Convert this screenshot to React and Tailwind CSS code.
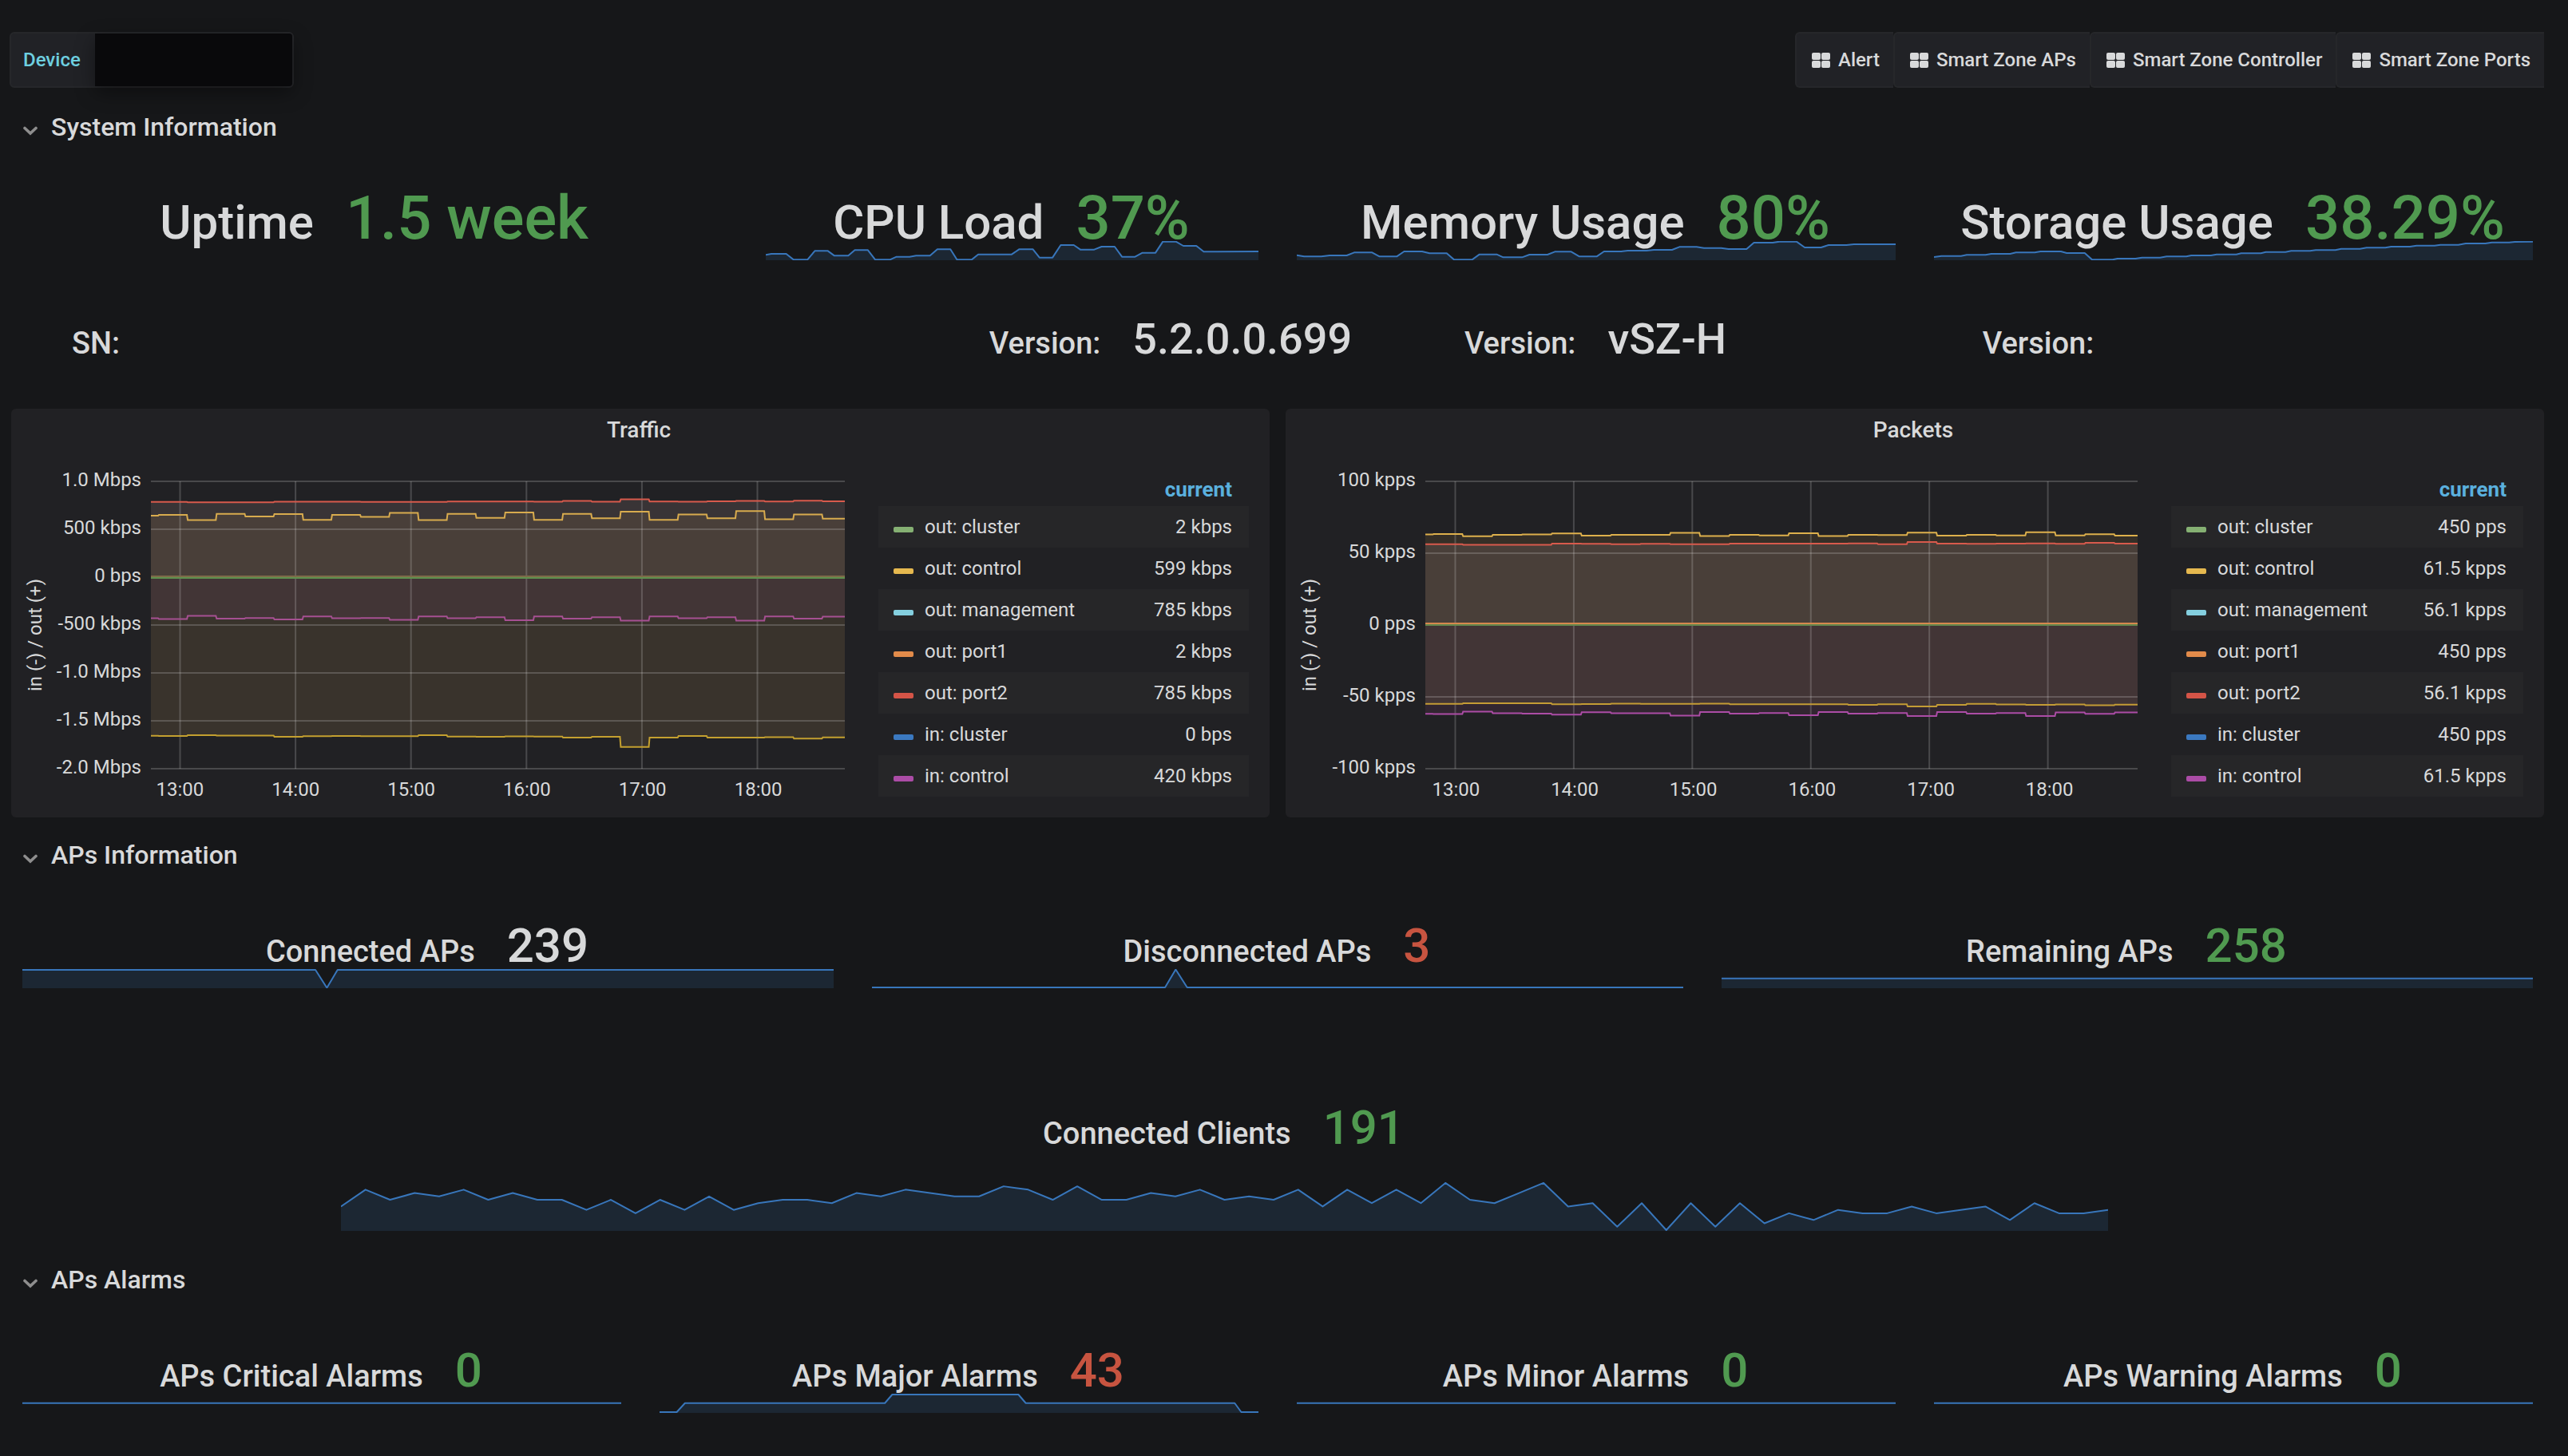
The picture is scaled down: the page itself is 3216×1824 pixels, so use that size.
import React from "react";

const LINKS = ["Alert", "Smart Zone APs", "Smart Zone Controller", "Smart Zone Ports"];

const CPU = {
  w: 603,
  h: 72,
  points:
    "0,52 7,48 25,48 34,70 51,70 60,37 76,37 84,55 101,55 109,34 125,34 134,70 152,70 160,59 176,59 184,55 201,55 210,31 226,31 234,70 252,70 260,50 301,50 310,31 327,31 335,62 351,62 361,15 377,15 385,32 402,32 411,21 427,21 436,59 452,59 461,44 477,44 486,2 502,2 511,18 527,18 536,40 603,39",
};
const MEMORY = {
  w: 731,
  h: 72,
  points:
    "0,53 9,58 30,58 40,54 61,54 70,43 92,43 101,58 122,58 131,39 153,39 162,46 183,46 192,70 214,70 223,50 244,50 252,61 275,61 284,51 306,51 315,40 335,40 345,58 366,58 375,39 396,39 404,36 427,36 436,33 458,33 467,22 488,22 497,26 518,26 527,30 549,30 558,6 581,6 589,2 610,2 620,24 640,24 649,15 671,15 680,12 731,12",
};
const STORAGE = {
  w: 731,
  h: 72,
  points:
    "0,60 9,56 33,56 40,52 63,52 70,48 93,48 100,43 123,43 130,39 155,39 162,45 184,45 193,70 218,70 224,66 246,66 254,62 276,62 284,58 308,58 314,54 338,54 345,50 369,50 375,46 399,46 405,41 429,41 436,37 459,37 466,34 490,34 497,29 520,29 528,25 551,25 558,21 581,21 589,17 611,17 618,14 640,14 649,9 673,9 681,5 702,5 709,3 731,2",
};
const CONNECTED = { w: 991, h: 47, points: "0,2 358,2 372,46 385,2 991,2" };
const DISCONNECTED = { w: 991, h: 47, points: "0,45 358,45 371,1 385,45 991,45" };
const REMAINING = { w: 991, h: 47, points: "0,23 991,23" };
const MAJOR = { w: 731, h: 47, points: "0,45 21,45 31,23 275,23 284,2 438,2 447,23 702,23 710,45 731,45" };
const FLAT = { w: 731, h: 47, points: "0,23 731,23", noFill: true };

const CLIENT_VALUES = [
  7, 12, 9, 11, 10, 12, 9, 11, 9, 9, 6, 9, 5, 9, 6, 10, 6, 8, 9, 9, 8, 11, 10, 12, 11, 10, 10, 13, 12, 9, 13, 9, 9, 11, 10,
  12, 9, 10, 9, 12, 7, 12, 8, 12, 8, 14, 9, 8, 11, 14, 7, 8, 1, 8, 0, 8, 1, 8, 2, 5, 3, 6, 5, 5, 7, 5, 6, 7, 3, 8, 5, 5, 6,
];
const CLIENTS = {
  w: CLIENT_VALUES.length - 1,
  h: 60,
  points: CLIENT_VALUES.map((v, i) => `${i},${59 - v * 4.15}`).join(" "),
};

function Sparkline({ data, tall }) {
  return (
    <svg
      aria-hidden="true"
      viewBox={`0 0 ${data.w} ${data.h}`}
      preserveAspectRatio="none"
      className={
        tall
          ? "absolute bottom-[14px] left-[14px] h-[61px] w-[calc(100%-28px)]"
          : "absolute bottom-[14px] left-[14px] h-6 w-[calc(100%-28px)]"
      }
    >
      {!data.noFill && <polygon points={`0,${data.h} ${data.points} ${data.w},${data.h}`} fill="#1c2733" />}
      <polyline
        points={data.points}
        fill="none"
        stroke="#3876bb"
        strokeWidth="2"
        strokeLinejoin="round"
        vectorEffect="non-scaling-stroke"
      />
    </svg>
  );
}

const LABEL_SIZES = { lg: "text-[60px]", sm: "text-[38px]" };
const VALUE_SIZES = { lg: "text-[76px]", md: "text-[60px]", sm: "text-[54px]" };
const TONES = { green: "text-[#509a50]", red: "text-[#c75440]", plain: "text-[#d8d9da]" };

function Stat({ span, label, value, tone = "plain", labelSize = "sm", valueSize = "md", spark, tall, blank }) {
  return (
    <section className={`relative flex items-center justify-center pb-[2px] ${span}`}>
      {spark && <Sparkline data={spark} tall={tall} />}
      <div className="relative flex items-baseline gap-10 whitespace-nowrap pr-[2px] leading-none font-medium">
        <h3 className={LABEL_SIZES[labelSize]}>{label}</h3>
        {blank ? (
          <span className={`${blank} ${VALUE_SIZES[valueSize]}`}>&nbsp;</span>
        ) : (
          <span className={`${VALUE_SIZES[valueSize]} ${TONES[tone]}`}>{value}</span>
        )}
      </div>
    </section>
  );
}

function RowTitle({ children }) {
  return (
    <button type="button" className="col-span-24 flex items-center gap-[17px] pb-[2px] pl-[15px] text-left text-[32px] leading-none font-medium">
      <svg width="18" height="12" viewBox="0 0 18 12" className="mt-[10px]" aria-hidden="true">
        <path d="M2 2.5 9 9 16 2.5" fill="none" stroke="#8e8e8e" strokeWidth="3.6" strokeLinecap="round" strokeLinejoin="miter" />
      </svg>
      <span>{children}</span>
    </button>
  );
}

const TIMES = ["13:00", "14:00", "15:00", "16:00", "17:00", "18:00"];
const W = 869;
const H = 360;
const FIRST = 9;
const STEP = 36.15;

/* Stepped line through 25 quarter-hour readings, the first of them cut by the left edge. */
function stepPoints(values, min, max) {
  const y = (v) => (((max - v) / (max - min)) * H).toFixed(1);
  return values
    .map((v, i) => {
      const x0 = i === 0 ? 0 : FIRST + (i - 1) * STEP + 1;
      const x1 = i === values.length - 1 ? W : FIRST + i * STEP;
      return `${x0.toFixed(1)},${y(v)} ${x1.toFixed(1)},${y(v)}`;
    })
    .join(" ");
}

const TRAFFIC = {
  title: "Traffic",
  min: -2000,
  max: 1000,
  ticks: ["1.0 Mbps", "500 kbps", "0 bps", "-500 kbps", "-1.0 Mbps", "-1.5 Mbps", "-2.0 Mbps"],
  series: [
    { fill: "#39332c", stroke: "#c4a02f", values: [-1656, -1658, -1651, -1654, -1654, -1666, -1661, -1658, -1661, -1661, -1651, -1664, -1666, -1663, -1664, -1676, -1666, -1773, -1676, -1658, -1674, -1674, -1671, -1686, -1673] },
    { fill: "#423536", stroke: "#a65092", values: [-430, -438, -404, -433, -427, -441, -410, -430, -427, -447, -410, -430, -418, -450, -410, -433, -418, -453, -410, -430, -418, -453, -410, -433, -412] },
    { fill: "#393436", stroke: "#d85a4c", values: [785, 785, 782, 782, 782, 788, 788, 788, 786, 786, 785, 789, 789, 789, 788, 796, 788, 813, 790, 788, 792, 795, 790, 798, 792] },
    { fill: "#493f39", stroke: "#d8ab4e", values: [641, 650, 595, 661, 633, 658, 598, 650, 630, 670, 595, 661, 618, 676, 598, 661, 615, 684, 598, 655, 615, 690, 604, 655, 610] },
  ],
  zero: [{ y: 119, color: "#7d6a49" }, { y: 121, color: "#5f904e" }],
  legendWidth: "w-[464px]",
  legend: [
    ["out: cluster", "2 kbps", "bg-[#85b073]"],
    ["out: control", "599 kbps", "bg-[#e5b84f]"],
    ["out: management", "785 kbps", "bg-[#84cfdf]"],
    ["out: port1", "2 kbps", "bg-[#e28b4a]"],
    ["out: port2", "785 kbps", "bg-[#d45447]"],
    ["in: cluster", "0 bps", "bg-[#3b79c0]"],
    ["in: control", "420 kbps", "bg-[#ab4ca6]"],
  ],
};

const PACKETS = {
  title: "Packets",
  min: -100,
  max: 100,
  ticks: ["100 kpps", "50 kpps", "0 pps", "-50 kpps", "-100 kpps"],
  series: [
    { fill: "#322631", stroke: "#ac4ca6", values: [-61.8, -62, -60.3, -61.4, -61.6, -62.4, -60.7, -61.4, -61.4, -63, -60.5, -61.6, -61.2, -62.8, -60.5, -61.6, -61.2, -63.3, -60.5, -61.6, -61.2, -63.4, -60.9, -61.8, -60.9] },
    { fill: "#423536", stroke: "#c49c35", values: [-54.9, -54.9, -54.5, -54.5, -54.5, -55.1, -55, -54.7, -54.9, -54.9, -54.7, -55.1, -55.1, -55.1, -55.1, -55.5, -55.1, -56.7, -55.5, -54.9, -55.3, -55.5, -55.3, -55.9, -55.4] },
    { fill: "#352f27", stroke: "#ddb04c", values: [63, 63.3, 61.8, 62.8, 63, 63.7, 62.2, 62.8, 62.8, 64.1, 62, 62.8, 62.4, 63.9, 62, 62.8, 62.6, 64.3, 62.2, 62.8, 62.4, 64.6, 62.4, 63.2, 62.2] },
    { fill: "#493f39", stroke: "#d85a4c", values: [56.3, 56.3, 55.9, 55.9, 55.9, 56.7, 56.5, 56.3, 56.5, 56.3, 56.3, 56.7, 56.7, 56.7, 56.6, 56.8, 56.3, 57.8, 56.7, 56.5, 56.7, 56.8, 56.5, 57.2, 56.7] },
  ],
  zero: [{ y: 180, color: "#64874d" }, { y: 178, color: "#d5884e" }],
  legendWidth: "w-[441px]",
  legend: [
    ["out: cluster", "450 pps", "bg-[#85b073]"],
    ["out: control", "61.5 kpps", "bg-[#e5b84f]"],
    ["out: management", "56.1 kpps", "bg-[#84cfdf]"],
    ["out: port1", "450 pps", "bg-[#e28b4a]"],
    ["out: port2", "56.1 kpps", "bg-[#d45447]"],
    ["in: cluster", "450 pps", "bg-[#3b79c0]"],
    ["in: control", "61.5 kpps", "bg-[#ab4ca6]"],
  ],
};

function Plot({ chart }) {
  const zeroY = (chart.max / (chart.max - chart.min)) * H;
  const rows = chart.ticks.length - 1;
  const lines = chart.series.map((s) => ({ ...s, points: stepPoints(s.values, chart.min, chart.max) }));
  return (
    <svg
      role="img"
      aria-label={`${chart.title} over time`}
      viewBox={`0 0 ${W} ${H}`}
      preserveAspectRatio="none"
      className="block h-[360px] w-full overflow-visible"
    >
      {lines.map((s, i) => (
        <polygon key={i} points={`0,${zeroY} ${s.points} ${W},${zeroY}`} fill={s.fill} />
      ))}
      <g stroke="#ffffff" strokeOpacity="0.18" strokeWidth="2">
        {chart.ticks.map((t, i) => (
          <line key={t} x1="0" x2={W} y1={(i * H) / rows} y2={(i * H) / rows} vectorEffect="non-scaling-stroke" />
        ))}
        {TIMES.map((t, i) => (
          <line key={t} x1={36.5 + i * 144.6} x2={36.5 + i * 144.6} y1="0" y2={H} vectorEffect="non-scaling-stroke" />
        ))}
      </g>
      {lines.map((s, i) => (
        <polyline key={i} points={s.points} fill="none" stroke={s.stroke} strokeWidth="2" vectorEffect="non-scaling-stroke" />
      ))}
      {chart.zero.map((z) => (
        <line key={z.y} x1="0" x2={W} y1={z.y} y2={z.y} stroke={z.color} strokeWidth="2" vectorEffect="non-scaling-stroke" />
      ))}
    </svg>
  );
}

function ChartPanel({ chart }) {
  return (
    <section className="col-span-12 row-span-7 flex flex-col rounded-md bg-[#212124]">
      <h2 className="pr-1 text-center text-[28px] leading-[54px] font-medium">{chart.title}</h2>
      <div className="flex flex-1 pr-[26px] pl-[18px] text-2xl leading-6">
        <div className="flex w-6 items-center justify-center">
          <span className="rotate-180 whitespace-nowrap [writing-mode:vertical-rl]">in (-) / out (+)</span>
        </div>
        <div className="mt-[23px] flex h-[384px] w-[121px] flex-col justify-between text-right whitespace-nowrap">
          {chart.ticks.map((t) => (
            <span key={t}>{t}</span>
          ))}
        </div>
        <div className="mt-[37px] ml-3 min-w-0 flex-1">
          <Plot chart={chart} />
          <div className="mt-[14px] mr-9 -ml-9 flex">
            {TIMES.map((t) => (
              <span key={t} className="flex-1 text-center">
                {t}
              </span>
            ))}
          </div>
        </div>
        <table className={`mt-[26px] ml-[42px] self-start ${chart.legendWidth}`}>
          <thead>
            <tr className="h-[42px]">
              <th aria-label="Series" />
              <th scope="col" className="pr-[21px] text-right text-[26px] font-bold text-[#5ab0de]">
                current
              </th>
            </tr>
          </thead>
          <tbody>
            {chart.legend.map(([name, value, color]) => (
              <tr key={name} className="h-[52px] odd:bg-[#262628]">
                <th scope="row" className="pl-[19px] text-left font-normal whitespace-nowrap">
                  <span className="flex items-center gap-[14px]">
                    <span className={`mt-[6px] h-[7px] w-[25px] rounded-xs ${color}`} />
                    {name}
                  </span>
                </th>
                <td className="pr-[21px] text-right whitespace-nowrap">{value}</td>
              </tr>
            ))}
          </tbody>
        </table>
      </div>
    </section>
  );
}

function GridIcon() {
  return (
    <svg width="23" height="19" viewBox="0 0 23 19" fill="#d8d9da" aria-hidden="true">
      <rect x="0" y="0" width="11" height="9" rx="2" />
      <rect x="12" y="0" width="11" height="9" rx="2" />
      <rect x="0" y="10" width="11" height="9" rx="2" />
      <rect x="12" y="10" width="11" height="9" rx="2" />
    </svg>
  );
}

export default function App() {
  return (
    <main className="min-h-screen bg-[#161719] pt-10 pr-[30px] pb-10 pl-[14px] font-[Roboto,sans-serif] text-[#d8d9da]">
      <header className="-ml-[2px] mb-[22px] flex items-start justify-between text-2xl leading-none font-medium">
        <div className="flex h-[70px] rounded-md border-2 border-[#26272a] bg-[#212226]">
          <label htmlFor="device" className="flex items-center pr-[18px] pl-[15px] text-[#6ed0e0]">
            Device
          </label>
          <select id="device" className="w-[247px] appearance-none rounded-r-sm bg-[#09090b] shadow-[0_8px_24px_rgba(0,0,0,0.4)]" />
        </div>
        <nav className="flex">
          {LINKS.map((name) => (
            <a
              key={name}
              href="#"
              className="flex h-[70px] items-center gap-[10px] rounded-l-md border-y-2 border-l-2 border-[#26272a] bg-[#212226] pr-[17px] pl-[19px] whitespace-nowrap"
            >
              <GridIcon />
              {name}
            </a>
          ))}
        </nav>
      </header>

      <div className="grid auto-rows-[56px] grid-cols-24 gap-5">
        <RowTitle>System Information</RowTitle>
        <Stat span="col-span-7 row-span-2" label="Uptime" value="1.5 week" tone="green" labelSize="lg" valueSize="lg" />
        <Stat span="col-span-5 row-span-2" label="CPU Load" value="37%" tone="green" labelSize="lg" valueSize="lg" spark={CPU} />
        <Stat span="col-span-6 row-span-2" label="Memory Usage" value="80%" tone="green" labelSize="lg" valueSize="lg" spark={MEMORY} />
        <Stat span="col-span-6 row-span-2" label="Storage Usage" value="38.29%" tone="green" labelSize="lg" valueSize="lg" spark={STORAGE} />

        <Stat span="col-span-9 row-span-2" label="SN:" valueSize="sm" blank="w-[923px]" />
        <Stat span="col-span-4 row-span-2" label="Version:" value="5.2.0.0.699" valueSize="sm" />
        <Stat span="col-span-4 row-span-2" label="Version:" value="vSZ-H" valueSize="sm" />
        <Stat span="col-span-7 row-span-2" label="Version:" valueSize="sm" blank="w-[314px]" />

        <ChartPanel chart={TRAFFIC} />
        <ChartPanel chart={PACKETS} />

        <RowTitle>APs Information</RowTitle>
        <Stat span="col-span-8 row-span-2" label="Connected APs" value="239" spark={CONNECTED} />
        <Stat span="col-span-8 row-span-2" label="Disconnected APs" value="3" tone="red" spark={DISCONNECTED} />
        <Stat span="col-span-8 row-span-2" label="Remaining APs" value="258" tone="green" spark={REMAINING} />
        <Stat span="col-span-17 col-start-4 row-span-4" label="Connected Clients" value="191" tone="green" spark={CLIENTS} tall />

        <RowTitle>APs Alarms</RowTitle>
        <Stat span="col-span-6 row-span-2" label="APs Critical Alarms" value="0" tone="green" spark={FLAT} />
        <Stat span="col-span-6 row-span-2" label="APs Major Alarms" value="43" tone="red" spark={MAJOR} />
        <Stat span="col-span-6 row-span-2" label="APs Minor Alarms" value="0" tone="green" spark={FLAT} />
        <Stat span="col-span-6 row-span-2" label="APs Warning Alarms" value="0" tone="green" spark={FLAT} />
      </div>
    </main>
  );
}
